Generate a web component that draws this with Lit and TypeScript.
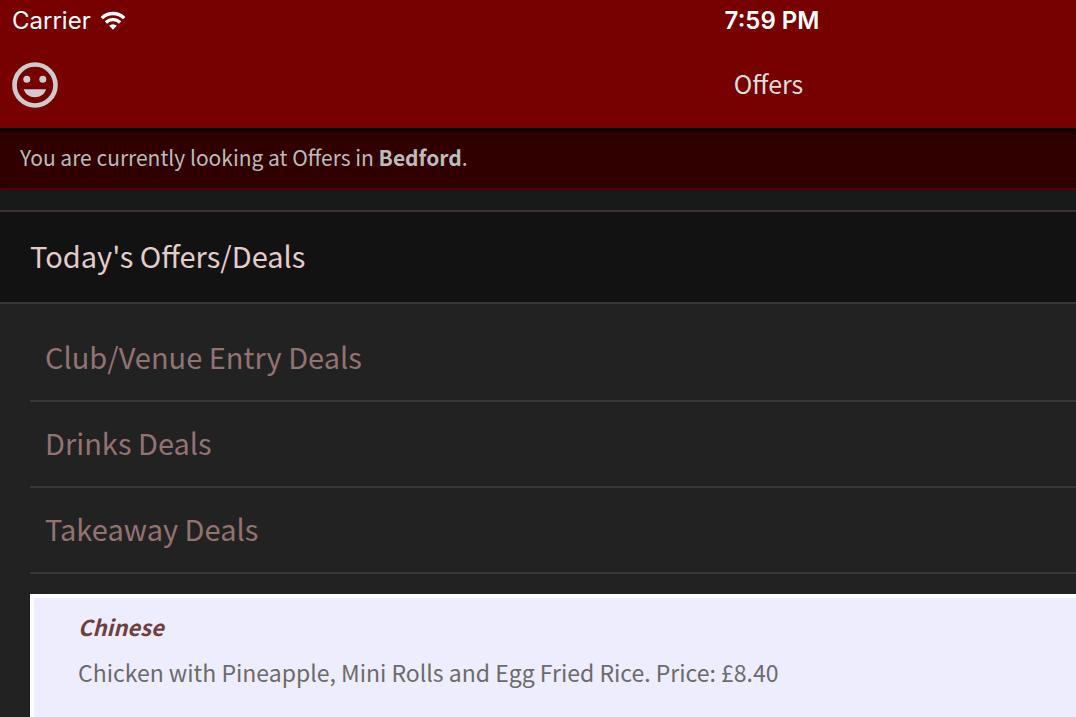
import { LitElement, html, css } from "lit";
import { customElement } from "lit/decorators.js";

@customElement("app-root")
export class AppRoot extends LitElement {
  static styles = css`
    :host {
      display: block;
      height: 100vh;
      overflow: hidden;
      background: #222222;
      font-family: "Noto Sans CJK SC", "Noto Sans", sans-serif;
    }
    * {
      box-sizing: border-box;
    }
    h1,
    h2,
    h3,
    p,
    ul {
      margin: 0;
      padding: 0;
      font-weight: 400;
    }
    ul {
      list-style: none;
    }
    header {
      background: #770000;
      border-bottom: 2px solid #000000;
    }
    .status,
    .bar {
      display: grid;
      grid-template-columns: 3fr 4fr;
      align-items: center;
    }
    .status {
      height: 42px;
      padding-left: 12px;
      color: #ffffff;
      font-family: Inter, sans-serif;
      font-size: 24px;
      line-height: 42px;
    }
    .carrier {
      display: flex;
      align-items: center;
      gap: 9px;
    }
    .time {
      text-align: center;
      font-weight: 600;
    }
    .bar {
      height: 86px;
    }
    .face {
      display: flex;
      width: 46px;
      height: 46px;
      margin-left: 12px;
      padding: 0;
      border: 0;
      background: none;
      color: #cccccc;
    }
    .title {
      padding-bottom: 4px;
      text-align: center;
      color: #dddddd;
      font-size: 25px;
      line-height: 44px;
    }
    .notice {
      padding: 10px 20px 14px;
      background: #300000;
      border-bottom: 2px solid #500000;
      box-shadow: inset 0 4px 4px -2px #150000;
      color: #bbbbbb;
      font-size: 21px;
      line-height: 34px;
    }
    .notice b {
      font-weight: 700;
    }
    main {
      padding-top: 20px;
      background: #181a19;
    }
    .section {
      border-top: 2px solid #3f3031;
      border-bottom: 2px solid #363636;
      padding: 20px 30px 24px;
      background: #121212;
      color: #e3cccc;
      font-size: 29px;
      line-height: 46px;
    }
    .panel {
      padding: 12px 0 0 30px;
      background: #222222;
    }
    .category {
      border-bottom: 2px solid #3c3637;
    }
    .category a {
      display: block;
      padding: 18px 15px 22px;
      color: #927373;
      font-size: 29px;
      line-height: 44px;
      text-decoration: none;
    }
    .offers {
      margin-top: 20px;
      border: 4px solid #ffffff;
      border-right: 0;
      padding: 8px 44px 80px;
      background: #eeedfd;
      color: #6b6b6b;
      font-size: 23px;
      line-height: 52px;
    }
    .offers h3 {
      color: #6e3f3f;
      font-size: 22px;
      line-height: 40px;
      font-weight: 700;
      font-style: italic;
    }
  `;

  private categories = ["Club/Venue Entry Deals", "Drinks Deals", "Takeaway Deals"];

  render() {
    return html`
      <header>
        <div class="status">
          <div class="carrier">
            <span>Carrier</span>
            <svg width="26" height="20" viewBox="0 0 26 20" fill="none" stroke="#fff" stroke-width="3.4" aria-label="Wi-Fi">
              <path d="M1.8 7.1a16 16 0 0 1 22.4 0" />
              <path d="M5.9 11.5a10.2 10.2 0 0 1 14.2 0" />
              <path d="M13 18.7l-3.9-3.9a5.6 5.6 0 0 1 7.8 0z" fill="#fff" stroke="none" />
            </svg>
          </div>
          <div class="time">7:59 PM</div>
        </div>
        <div class="bar">
          <button class="face" type="button" aria-label="Menu">
            <svg width="46" height="46" viewBox="0 0 46 46" fill="currentColor">
              <circle cx="23" cy="23" r="20.5" fill="none" stroke="currentColor" stroke-width="4.6" />
              <circle cx="14.8" cy="17.2" r="3.5" />
              <circle cx="30.8" cy="17.2" r="3.5" />
              <path d="M11.6 27.2h22.6a12 12 0 0 1-22.6 0z" />
            </svg>
          </button>
          <h1 class="title">Offers</h1>
        </div>
      </header>
      <p class="notice">You are currently looking at Offers in <b>Bedford</b>.</p>
      <main>
        <h2 class="section">Today's Offers/Deals</h2>
        <div class="panel">
          <ul>
            ${this.categories.map((name) => html`<li class="category"><a href="#">${name}</a></li>`)}
          </ul>
          <section class="offers">
            <h3>Chinese</h3>
            <p>Chicken with Pineapple, Mini Rolls and Egg Fried Rice. Price: £8.40</p>
          </section>
        </div>
      </main>
    `;
  }
}
